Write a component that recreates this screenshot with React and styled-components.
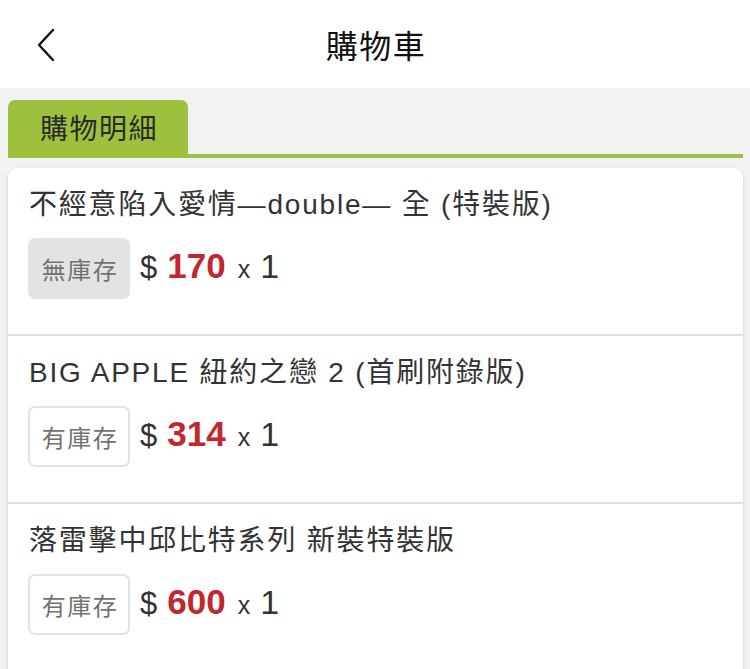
import React from 'react'
import styled, { createGlobalStyle } from 'styled-components'

const GlobalStyle = createGlobalStyle`
  html, body {
    margin: 0;
    padding: 0;
    background: #f2f2f2;
    font-family: "Liberation Sans", "Noto Sans CJK TC", sans-serif;
    color: #333;
  }
`

const Page = styled.div`
  width: 750px;
  height: 669px;
  overflow: hidden;
  background: #f2f2f2;
`

const Header = styled.header`
  height: 88px;
  background: #fff;
  display: flex;
  align-items: center;
  justify-content: center;
  position: relative;
`

const BackButton = styled.button`
  position: absolute;
  left: 28px;
  top: 24px;
  width: 36px;
  height: 42px;
  border: 0;
  padding: 0;
  background: none;
  display: flex;
  align-items: center;
  justify-content: center;
`

const Title = styled.h1`
  margin: 0 0 0 2px;
  font-size: 32px;
  letter-spacing: 1.5px;
  font-weight: 400;
  color: #111;
`

const Body = styled.div`
  padding: 12px 7px 0 8px;
`

const TabBar = styled.div`
  display: flex;
  border-bottom: 4px solid #9dc13f;
`

const Tab = styled.div`
  width: 180px;
  height: 54px;
  background: #9dc13f;
  border-radius: 7px 7px 0 0;
  display: flex;
  align-items: center;
  justify-content: center;
  padding-left: 2px;
  box-sizing: border-box;
  font-size: 28px;
  letter-spacing: 1.5px;
  color: #2a2a2a;
`

const Card = styled.div`
  margin-top: 10px;
  background: #fff;
  border-radius: 9px 9px 0 0;
  box-shadow: 0 1px 3px rgba(0, 0, 0, 0.18);
`

const Item = styled.div`
  padding: 19px 20px 35px 20px;
  border-bottom: 2px solid #dedede;
`

const ItemName = styled.div`
  font-size: 28px;
  letter-spacing: 1.8px;
  line-height: 36px;
  padding-left: 1px;
  color: #333;
  white-space: nowrap;
`

const PriceRow = styled.div`
  margin-top: 15px;
  display: flex;
  align-items: center;
  gap: 10px;
`

const Stock = styled.div`
  width: 102px;
  height: 61px;
  box-sizing: border-box;
  border-radius: 7px;
  display: flex;
  align-items: center;
  justify-content: center;
  padding-left: 2px;
  font-size: 24px;
  letter-spacing: 1.5px;
  color: #727272;
  background: ${p => (p.$out ? '#e3e3e3' : '#fff')};
  border: ${p => (p.$out ? 'none' : '2px solid #e2e2e2')};
`

const Price = styled.div`
  display: flex;
  align-items: baseline;
  color: #333;
  margin-top: -6px;
`

const Dollar = styled.span`
  font-size: 31px;
  margin-right: 10px;
`

const Amount = styled.span`
  font-size: 35px;
  font-weight: 700;
  color: #c1272d;
  margin-right: 12px;
`

const Times = styled.span`
  font-size: 25px;
  margin-right: 10px;
`

const Qty = styled.span`
  font-size: 34px;
`

const items = [
  { name: '不經意陷入愛情—double— 全 (特裝版)', out: true, price: 170, qty: 1 },
  { name: 'BIG APPLE 紐約之戀 2 (首刷附錄版)', out: false, price: 314, qty: 1 },
  { name: '落雷擊中邱比特系列 新裝特裝版', out: false, price: 600, qty: 1 },
]

const App = () => (
  <Page>
    <GlobalStyle />
    <Header>
      <BackButton aria-label="back">
        <svg width="20" height="34" viewBox="0 0 20 34">
          <path d="M17 2 L3 17 L17 32" fill="none" stroke="#111" strokeWidth="2.4" strokeLinecap="round" strokeLinejoin="round" />
        </svg>
      </BackButton>
      <Title>購物車</Title>
    </Header>
    <Body>
      <TabBar>
        <Tab>購物明細</Tab>
      </TabBar>
      <Card>
        {items.map(item => (
          <Item key={item.name}>
            <ItemName>{item.name}</ItemName>
            <PriceRow>
              <Stock $out={item.out}>{item.out ? '無庫存' : '有庫存'}</Stock>
              <Price>
                <Dollar>$</Dollar>
                <Amount>{item.price}</Amount>
                <Times>x</Times>
                <Qty>{item.qty}</Qty>
              </Price>
            </PriceRow>
          </Item>
        ))}
      </Card>
    </Body>
  </Page>
)

export default App
